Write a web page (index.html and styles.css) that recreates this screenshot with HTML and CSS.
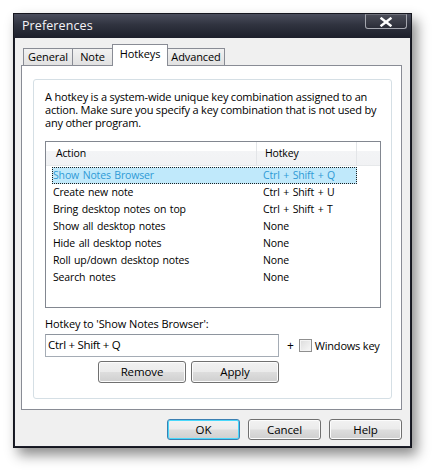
FILE: index.html
```html
<!DOCTYPE html>
<html>
<head>
<meta charset="utf-8">
<link rel="stylesheet" href="styles.css">
</head>
<body>
<div class="window">
  <div class="titlebar">
    <span class="title">Preferences</span>
    <span class="close"><svg width="14" height="10" viewBox="0 0 14 10"><path d="M2.5 1.5 L11.5 8.5 M11.5 1.5 L2.5 8.5" stroke="#fff" stroke-width="2.4" stroke-linecap="square"/></svg></span>
  </div>
  <div class="client">
    <div class="tabs">
      <div class="tab t-general">General</div>
      <div class="tab t-note">Note</div>
      <div class="tab t-hotkeys active">Hotkeys</div>
      <div class="tab t-advanced">Advanced</div>
    </div>
    <div class="panel">
      <div class="group">
        <p class="desc">A hotkey is a system-wide unique key combination assigned to an action. Make sure you specify a key combination that is not used by any other program.</p>
        <div class="list">
          <div class="header">
            <div class="hcell c1">Action</div>
            <div class="hcell c2">Hotkey</div>
            <div class="hcell c3"></div>
          </div>
          <div class="rows">
            <div class="row selected"><span class="a">Show Notes Browser</span><span class="k">Ctrl + Shift + Q</span></div>
            <div class="row"><span class="a">Create new note</span><span class="k">Ctrl + Shift + U</span></div>
            <div class="row"><span class="a">Bring desktop notes on top</span><span class="k">Ctrl + Shift + T</span></div>
            <div class="row"><span class="a">Show all desktop notes</span><span class="k">None</span></div>
            <div class="row"><span class="a">Hide all desktop notes</span><span class="k">None</span></div>
            <div class="row"><span class="a">Roll up/down desktop notes</span><span class="k">None</span></div>
            <div class="row"><span class="a">Search notes</span><span class="k">None</span></div>
          </div>
        </div>
        <div class="label">Hotkey to 'Show Notes Browser':</div>
        <div class="editrow">
          <div class="edit">Ctrl + Shift + Q</div>
          <span class="plus">+</span>
          <span class="check"></span>
          <span class="checklabel">Windows key</span>
        </div>
        <div class="actions">
          <div class="btn wide">Remove</div>
          <div class="btn wide">Apply</div>
        </div>
      </div>
    </div>
    <div class="footer">
      <div class="btn dlg default">OK</div>
      <div class="btn dlg">Cancel</div>
      <div class="btn dlg">Help</div>
    </div>
  </div>
</div>
</body>
</html>
```
FILE: styles.css
```css
html, body {
  margin: 0;
  padding: 0;
  background: #ffffff;
  width: 433px;
  height: 470px;
  overflow: hidden;
  font-family: "Open Sans", "Liberation Sans", sans-serif;
  font-size: 11px;
  letter-spacing: -0.1px;
  color: #000;
}
.window {
  margin: 13px 0 0 13px;
  width: 399px;
  height: 435px;
  box-sizing: border-box;
  background: #1c1e2a;
  border: 1px solid #15161e;
  display: flex;
  flex-direction: column;
  box-shadow: 5px 7px 12px rgba(0,0,0,0.45);
}
.titlebar {
  height: 24px;
  flex: none;
  display: flex;
  justify-content: space-between;
  align-items: flex-start;
  background: linear-gradient(#4b4e5d 0%, #30333f 45%, #1d1f2b 100%);
  padding: 0 4px 0 8px;
}
.title {
  color: #f4f4f8;
  font-size: 12.5px;
  line-height: 24px;
  letter-spacing: 0.1px;
}
.close {
  width: 42px;
  height: 15px;
  box-sizing: border-box;
  border: 1px solid #a4a6ae;
  border-top-color: #6c6e78;
  border-radius: 0 0 3px 3px;
  background: linear-gradient(#4a4c57, #2b2d38);
  display: flex;
  align-items: center;
  justify-content: center;
}
.client {
  flex: 1;
  background: #f0f0f0;
  margin: 0 1px 1px 1px;
  display: flex;
  flex-direction: column;
  padding: 6px 8px 0 6px;
}
.tabs {
  display: flex;
  height: 21px;
  align-items: flex-end;
  padding-left: 2px;
  position: relative;
  z-index: 1;
}
.tab {
  height: 17px;
  box-sizing: border-box;
  border: 1px solid #898c95;
  border-bottom: none;
  margin-right: -1px;
  background: linear-gradient(#f2f2f2, #e1e1e1);
  text-align: center;
  line-height: 16px;
}
.t-general { width: 50px; }
.t-note { width: 41px; }
.t-hotkeys { width: 56px; }
.t-advanced { width: 58px; }
.tab.active {
  background: #ffffff;
  line-height: 17px;
  margin-bottom: -1px;
  position: relative;
  z-index: 2;
  height: 22px;
}
.panel {
  height: 345px;
  box-sizing: border-box;
  border: 1px solid #898c95;
  background: #ffffff;
  padding: 13px 9px 10px 11px;
}
.group {
  height: 100%;
  box-sizing: border-box;
  border: 1px solid #d5dfe5;
  border-radius: 3px;
  padding: 10px 11px 0 11px;
}
.desc {
  margin: 0;
  line-height: 13px;
  width: 335px;
  letter-spacing: -0.2px;
}
.list {
  margin-top: 12px;
  height: 167px;
  box-sizing: border-box;
  border: 1px solid #828790;
  width: 336px;
  font-size: 10.5px;
  letter-spacing: -0.15px;
  word-spacing: 1px;
}
.header {
  display: flex;
  height: 24px;
  background: linear-gradient(#ffffff 0%, #ffffff 40%, #f3f4f6 41%, #f1f2f4 100%);
  border-bottom: 1px solid #e6e8ea;
  box-sizing: border-box;
}
.hcell {
  line-height: 22px;
  box-sizing: border-box;
  border-right: 1px solid #e3e5e8;
}
.c1 { width: 211px; padding-left: 10px; }
.c2 { width: 100px; padding-left: 8px; }
.c3 { flex: 1; border-right: none; }
.rows {
  padding: 1px 0 0 6px;
}
.row {
  display: flex;
  width: 305px;
  height: 17px;
  box-sizing: border-box;
  border: 1px solid transparent;
  line-height: 15px;
}
.row .a { width: 210px; }
.row.selected {
  background: #c0e9fb;
  border: 1px dotted #1e1e1e;
  color: #2e9ad6;
}
.label {
  margin-top: 9px;
  line-height: 14px;
}
.editrow {
  display: flex;
  align-items: center;
  margin-top: 3px;
  white-space: nowrap;
}
.edit {
  flex: none;
  width: 234px;
  height: 23px;
  box-sizing: border-box;
  border: 1px solid #a5acb5;
  border-top-color: #8e959e;
  line-height: 20px;
  padding-left: 2px;
  font-size: 11.5px;
  letter-spacing: -0.3px;
}
.plus {
  margin-left: 8px;
  font-size: 12px;
}
.check {
  flex: none;
  margin-left: 5px;
  width: 13px;
  height: 13px;
  box-sizing: border-box;
  border: 1px solid #8f8f8f;
  background: linear-gradient(135deg, #dcdcdc, #f8f8f8);
  box-shadow: inset 0 0 0 1px #f4f4f4;
}
.checklabel {
  margin-left: 3px;
  font-size: 11px;
  letter-spacing: -0.2px;
}
.actions {
  width: 234px;
  display: flex;
  justify-content: flex-end;
  gap: 5px;
  margin-top: 4px;
}
.btn {
  height: 22px;
  box-sizing: border-box;
  border: 1px solid #707070;
  border-radius: 3px;
  background: linear-gradient(#f2f2f2 0%, #ebebeb 48%, #dddddd 52%, #cfcfcf 100%);
  box-shadow: inset 0 0 0 1px #fcfcfc;
  text-align: center;
  line-height: 20px;
  font-size: 11.5px;
}
.btn.wide { width: 88px; }
.footer {
  display: flex;
  justify-content: flex-end;
  gap: 8px;
  margin-top: 9px;
}
.btn.dlg { width: 73px; height: 21px; line-height: 19px; }
.btn.default {
  border-color: #3c7fb1;
  box-shadow: inset 0 0 0 1px #48d8fb;
}
```
